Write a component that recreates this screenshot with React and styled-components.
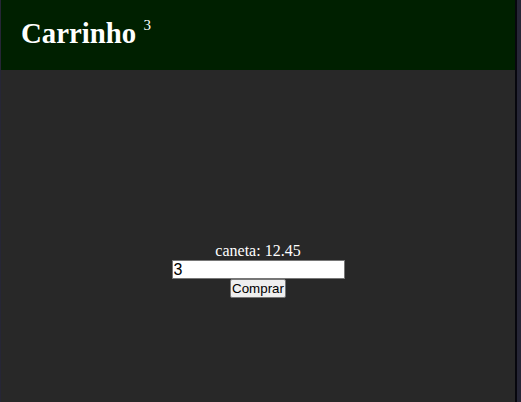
import React from "react";
import styled, { createGlobalStyle } from "styled-components";

const GlobalStyle = createGlobalStyle`
  html, body {
    margin: 0;
    padding: 0;
    height: 100%;
    overflow: hidden;
    background: #262636;
  }
`;

const Frame = styled.div`
  display: flex;
  height: 100vh;
  padding-left: 1px;
`;

const Page = styled.div`
  width: 514px;
  display: flex;
  flex-direction: column;
  background: #282828;
  font-family: "Liberation Serif", "Times New Roman", serif;
  color: #fff;
`;

const Edge = styled.div`
  width: 2px;
  background: #07070e;
`;

const Header = styled.header`
  height: 70px;
  display: flex;
  align-items: center;
  padding-left: 20px;
  background: #002000;
`;

const Title = styled.h1`
  margin: 0;
  font-size: 28.8px;
  font-weight: bold;
  line-height: 1;
  padding-bottom: 5px;
`;

const Count = styled.sup`
  font-size: 15px;
  font-weight: normal;
  vertical-align: 13px;
`;

const Main = styled.main`
  flex: 1;
  display: flex;
  flex-direction: column;
  align-items: center;
  padding-top: 172px;
`;

const Label = styled.div`
  font-size: 16px;
  line-height: 18px;
`;

const Qty = styled.input`
  box-sizing: border-box;
  width: 173px;
  height: 19px;
  margin: 0;
  padding: 0 1px;
  border: 1px solid #767676;
  background: #fff;
  color: #000;
  font-family: "Liberation Sans", Arial, sans-serif;
  font-size: 16px;
  outline: none;
`;

const BuyButton = styled.button`
  box-sizing: border-box;
  height: 19px;
  margin: 0;
  padding: 0 1px;
  border: 1px solid #767676;
  border-radius: 2px;
  background: #efefef;
  color: #000;
  font-family: "Liberation Sans", Arial, sans-serif;
  font-size: 13.33px;
  line-height: 1;
`;

export default function App() {
  return (
    <>
      <GlobalStyle />
      <Frame>
        <Page>
          <Header>
            <Title>
              Carrinho <Count>3</Count>
            </Title>
          </Header>
          <Main>
            <Label>caneta: 12.45</Label>
            <Qty type="number" defaultValue="3" />
            <BuyButton>Comprar</BuyButton>
          </Main>
        </Page>
        <Edge />
      </Frame>
    </>
  );
}
